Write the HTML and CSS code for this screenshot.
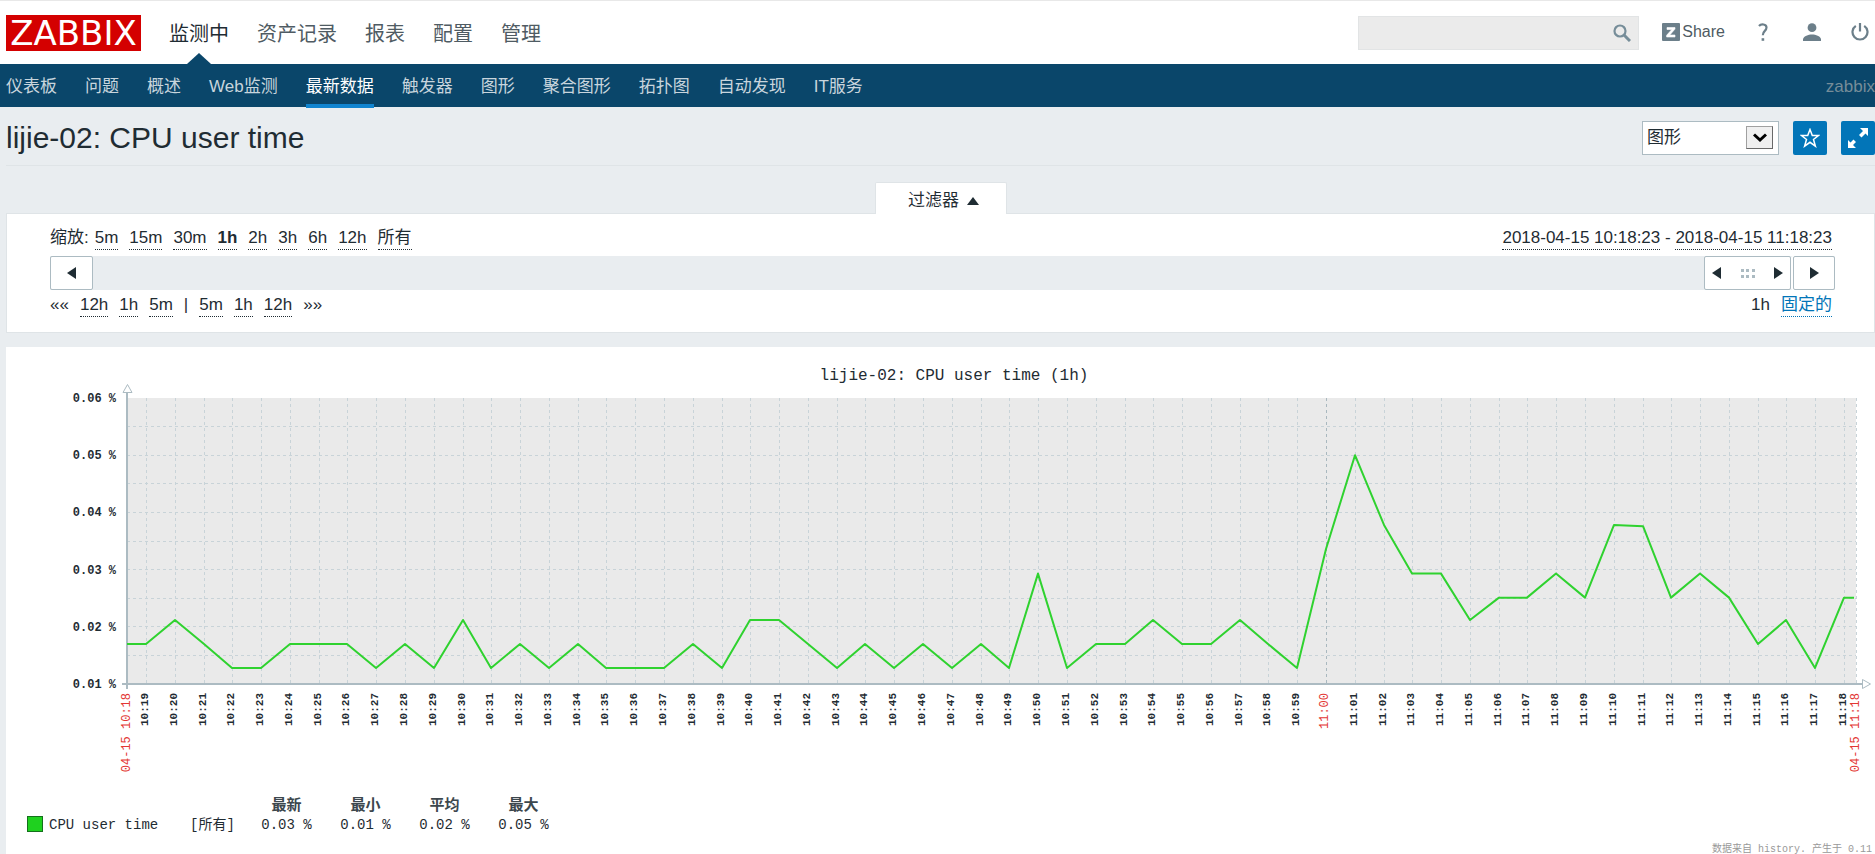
FILE: index.html
```html
<!DOCTYPE html>
<html lang="zh-CN">
<head>
<meta charset="utf-8">
<title>lijie-02: CPU user time</title>
<link rel="stylesheet" href="styles.css">
</head>
<body>
<header class="top">
  <a class="logo" href="#">ZABBIX</a>
  <nav class="menu">
    <a class="active" href="#">监测中</a>
    <a href="#">资产记录</a>
    <a href="#">报表</a>
    <a href="#">配置</a>
    <a href="#">管理</a>
  </nav>
  <form class="search">
    <input type="text" aria-label="搜索">
    <button type="button" aria-label="搜索"><svg width="18" height="18" viewBox="0 0 18 18" fill="none" stroke="#768d99"><circle cx="7" cy="7" r="5.5" stroke-width="2.2"/><path d="M11 11l6 6" stroke-width="3"/></svg></button>
  </form>
  <div class="tools">
    <a class="share" href="#"><svg width="18" height="18" viewBox="0 0 18 18"><rect width="18" height="18" rx="1" fill="#6c7f8a"/><path d="M5 4.5h8v1.6L7.8 12H13v2H4.600v-1.700L9.800 6.500H5z" fill="#fff" stroke="#fff" stroke-width=".6"/></svg>Share</a>
    <a href="#" aria-label="帮助"><svg width="18" height="18" viewBox="0 0 18 18" fill="none" stroke="#6c7f8a" stroke-width="2.200"><path d="M4 3C6 .6 11.500.8 11.500 4.600 11.500 8 7.800 7.800 7.800 12.200"/><path d="M6.600 16.500h2.600" stroke-width="2.600"/></svg></a>
    <a href="#" aria-label="用户"><svg width="18" height="18" viewBox="0 0 18 18" fill="#6c7f8a"><circle cx="9" cy="4.700" r="4.400"/><path d="M0 18v-2c1-3 5-4.500 9-4.500s8 1.500 9 4.500v2z"/></svg></a>
    <a href="#" aria-label="退出"><svg width="18" height="18" viewBox="0 0 18 18" fill="none" stroke="#6c7f8a" stroke-width="2.200"><path d="M9 0v8.500"/><path d="M4.800 2.800a7.500 7.500 0 1 0 8.400 0"/></svg></a>
  </div>
</header>
<nav class="subnav">
  <a href="#">仪表板</a>
  <a href="#">问题</a>
  <a href="#">概述</a>
  <a href="#">Web监测</a>
  <a class="active" href="#">最新数据</a>
  <a href="#">触发器</a>
  <a href="#">图形</a>
  <a href="#">聚合图形</a>
  <a href="#">拓扑图</a>
  <a href="#">自动发现</a>
  <a href="#">IT服务</a>
  <span class="server">zabbix</span>
</nav>
<main class="page">
  <div class="title-row">
    <h1>lijie-02: CPU user time</h1>
    <div class="select">
      <select aria-label="显示为"><option>图形</option><option>值</option></select>
      <span class="drop"><svg width="14" height="10" viewBox="0 0 14 10" fill="none" stroke="#000" stroke-width="3"><path d="M1 1.500l6 5.500 6-5.500"/></svg></span>
    </div>
    <button class="square" type="button" aria-label="收藏"><svg width="20" height="20" viewBox="0 0 20 20" fill="none" stroke="#fff" stroke-width="1.500"><path d="M10 1.500l2.300 6h6.200l-5 4 1.900 6.700L10 14.300l-5.400 3.900 1.900-6.700-5-4h6.200z"/></svg></button>
    <button class="square" type="button" aria-label="全屏"><svg width="20" height="20" viewBox="0 0 20 20" fill="#fff"><path d="M12 0h8v8l-2.500-2.500-4 4L11 7l4-4zM0 12l2.500 2.500L5.500 11.500 8 14l-3 3 3 3H0z"/></svg></button>
  </div>
  <div class="tab-row"><button class="tab" type="button">过滤器<i class="tri up"></i></button></div>
  <section class="filter">
    <div class="line">
      <div class="links zoom"><span class="label">缩放:</span><a href="#">5m</a><a href="#">15m</a><a href="#">30m</a><a class="bold" href="#">1h</a><a href="#">2h</a><a href="#">3h</a><a href="#">6h</a><a href="#">12h</a><a href="#">所有</a></div>
      <div class="dates"><a href="#">2018-04-15 10:18:23</a> - <a href="#">2018-04-15 11:18:23</a></div>
    </div>
    <div class="slider">
      <button class="prev" type="button" aria-label="向前"><i class="tri left"></i></button>
      <div class="thumb"><i class="tri left"></i><svg width="14" height="9" viewBox="0 0 14 9" fill="#acbbc2"><path d="M0 0h3v3H0zM5 0h3v3H5zM11 0h3v3h-3zM0 6h3v3H0zM5 6h3v3H5zM11 6h3v3h-3z"/></svg><i class="tri right"></i></div>
      <button class="next" type="button" aria-label="向后"><i class="tri right"></i></button>
    </div>
    <div class="line">
      <div class="links"><span>««</span><a href="#">12h</a><a href="#">1h</a><a href="#">5m</a><span>|</span><a href="#">5m</a><a href="#">1h</a><a href="#">12h</a><span>»»</span></div>
      <div class="links"><span>1h</span><a class="blue" href="#">固定的</a></div>
    </div>
  </section>
  <section class="graph">
    <div id="chart" class="chart"></div>
    <table class="legend">
      <thead><tr><th></th><th></th><th>最新</th><th>最小</th><th>平均</th><th>最大</th></tr></thead>
      <tbody><tr><td class="name"><i class="swatch"></i>CPU user time</td><td class="func">[所有]</td><td>0.03 %</td><td>0.01 %</td><td>0.02 %</td><td>0.05 %</td></tr></tbody>
    </table>
    <p class="source">数据来自 history. 产生于 0.11</p>
  </section>
</main>
<script src="chart.js"></script>
</body>
</html>
```
FILE: styles.css
```css
* { box-sizing: border-box; }
body {
  margin: 0;
  height: 100vh;
  overflow: hidden;
  display: flex;
  flex-direction: column;
  background: #e9edf0;
  color: #1f2c33;
  font: 17px/20px "Liberation Sans", "Noto Sans CJK SC", sans-serif;
}
a { color: inherit; text-decoration: none; }
button, select, input { font: inherit; color: inherit; border-radius: 0; }
button { display: flex; align-items: center; justify-content: center; padding: 0; }

.top {
  flex: none;
  display: flex;
  align-items: center;
  height: 64px;
  padding: 0 6px;
  background: #fff;
  border-top: 1px solid #e8e8e8;
}
.logo {
  width: 135px;
  height: 36px;
  background: #d40000;
  color: #fff;
  font: 34px/36px "DejaVu Sans", sans-serif;
  text-align: center;
}
.menu { display: flex; gap: 28px; margin-left: 28px; font-size: 20px; line-height: 66px; color: #4f5b63; }
.menu a { height: 63px; }
.menu .active { position: relative; color: #1f2c33; }
.menu .active::after {
  content: "";
  position: absolute;
  bottom: 0;
  left: 18px;
  border: 12px solid transparent;
  border-top-width: 0;
  border-bottom: 11px solid #0a466a;
}
.search {
  display: flex;
  width: 281px;
  height: 34px;
  margin-left: auto;
  background: #ebebeb;
  border: 1px solid #e2e4e5;
}
.search input { flex: 1; min-width: 0; border: 0; background: none; outline: 0; padding: 0 8px; }
.search button { width: 33px; border: 0; background: none; }
.tools { display: flex; align-items: center; gap: 30px; margin-left: 23px; padding-bottom: 2px; }
.tools a { display: flex; }
.share { align-items: center; gap: 2px; font-size: 16px; color: #4f5b63; }

.subnav {
  flex: none;
  display: flex;
  gap: 28px;
  height: 43px;
  padding-left: 6px;
  background: #0a466a;
  color: #c8d5dd;
  line-height: 45px;
}
.subnav .active { height: 44px; border-bottom: 4px solid #1184cf; color: #fff; }
.server { margin-left: auto; color: #768d99; }

.page { flex: 1; min-height: 0; display: flex; flex-direction: column; padding-left: 6px; }
.title-row { flex: none; display: flex; align-items: center; gap: 14px; height: 59px; padding-top: 4px; border-bottom: 1px solid #dfe4e7; }
h1 { margin: 0 auto 0 0; font-size: 30px; line-height: 36px; font-weight: normal; }
.select { position: relative; }
.select select {
  display: block;
  width: 137px;
  height: 34px;
  padding: 0 4px;
  appearance: none;
  background: #fff;
  border: 1px solid #acbbc2;
}
.drop {
  position: absolute;
  top: 5px;
  right: 6px;
  width: 27px;
  height: 23px;
  display: flex;
  align-items: center;
  justify-content: center;
  background: #f0f0f0;
  border: 1px solid #a0a0a0;
  border-right-color: #696969;
  border-bottom-color: #696969;
  pointer-events: none;
}
.square { width: 34px; height: 34px; border: 0; border-radius: 2px; background: #0275b8; }

.tab-row { flex: none; display: flex; justify-content: center; padding-top: 16px; }
.tab {
  position: relative;
  gap: 8px;
  width: 132px;
  height: 32px;
  margin-bottom: -1px;
  padding: 4px 0 0 6px;
  background: #fff;
  border: 1px solid #dfe4e7;
  border-bottom: 0;
  border-radius: 2px 2px 0 0;
}
.tri { width: 0; height: 0; border: 6px solid transparent; }
.tri.up { border-top: 0; border-bottom: 8px solid #1f2c33; }
.tri.left { border-left: 0; border-right: 9px solid #1f2c33; }
.tri.right { border-right: 0; border-left: 9px solid #1f2c33; }

.filter { flex: none; padding: 14px 39px 9px 43px; background: #fff; border: 1px solid #dfe4e7; }
.line { display: flex; justify-content: space-between; height: 28px; padding-right: 3px; line-height: 20px; }
.links { display: flex; gap: 11px; }
.label { margin-right: -5px; }
.line a { display: inline-block; height: 22px; border-bottom: 1px dotted #1f2c33; }
.line .blue { color: #0275b8; border-color: #0275b8; }
.bold { font-weight: bold; }
.slider { display: flex; height: 34px; margin-bottom: 5px; background: #e9edf0; }
.slider button, .thumb { height: 34px; background: #fff; border: 1px solid #acbbc2; border-radius: 2px; }
.prev { width: 43px; }
.next { width: 42px; box-shadow: -2px 0 #fff; }
.thumb { display: flex; align-items: center; justify-content: space-between; width: 87px; padding: 0 7px; margin: 0 2px 0 auto; }

.graph { flex: 1; margin-top: 14px; background: #fff; font-family: "Liberation Mono", "Noto Sans CJK SC", monospace; }
.chart { height: 450px; }
.chart svg { display: block; }
.chart-title { font-size: 16px; fill: #1f2c33; text-anchor: middle; }
.tick { font-size: 12px; font-weight: bold; fill: #1f2c33; text-anchor: end; }
.time { font-size: 11px; }
.mark { font-weight: normal; fill: #e33734; }
.grid { stroke: #c8d3d8; stroke-dasharray: 3 3; }
.grid.hour { stroke: #a9b8bf; }
.axis { fill: none; stroke: #acbbc2; stroke-width: 2; }
.arrow { fill: #fff; stroke: #acbbc2; stroke-width: 1; }
.series { fill: none; stroke: #2fd22f; stroke-width: 2; stroke-linejoin: round; }
.legend { margin-left: 21px; border-collapse: collapse; font-size: 14px; line-height: 19px; }
.legend th, .legend td { width: 79px; padding: 0; text-align: center; font-weight: normal; white-space: nowrap; }
.legend th { font-size: 15px; font-weight: bold; color: #3c474d; }
.legend th:nth-child(-n+2) { width: auto; }
.legend .name { width: 159px; text-align: left; }
.legend .func { width: 61px; padding-right: 8px; }
.swatch { display: inline-block; width: 16px; height: 16px; margin-right: 6px; vertical-align: -3px; background: #1fd11f; border: 1px solid #14701c; }
.source { margin: 7px 3px 0 0; font-size: 10px; line-height: 16px; color: #999; text-align: right; }
```
FILE: chart.js
```js
(function () {
  const host = document.getElementById("chart");
  const values = [
    170, 212, 170, 128, 128, 170, 170, 170, 128, 170, 128, 212, 128, 170, 128,
    170, 128, 128, 128, 170, 128, 212, 212, 170, 128, 170, 128, 170, 128, 170,
    128, 293, 128, 170, 170, 212, 170, 170, 212, 170, 128, 336, 500, 378, 293,
    293, 212, 251, 251, 293, 251, 378, 376, 251, 293, 251, 170, 212, 128, 251
  ];

  function draw() {
    const w = host.clientWidth;
    const left = 121, first = 140, last = w - 31, right = w - 19;
    const yTop = 51, yBase = 337;
    const px = i => Math.round(first + i * (last - first) / (values.length - 1));
    const py = v => yBase - (v - 100) / 500 * (yBase - yTop);
    let s = `<rect x="${left}" y="${yTop}" width="${right - left}" height="${yBase - yTop}" fill="#eaeaea"/>`;
    for (let v = 150; v < 600; v += 50) {
      const y = Math.floor(py(v)) + 0.5;
      s += `<path class="grid" d="M${left} ${y}H${right}"/>`;
    }
    let times = "";
    values.forEach((v, i) => {
      const x = px(i), m = 19 + i;
      const hour = m === 60;
      const label = m < 60 ? "10:" + m : "11:" + String(m - 60).padStart(2, "0");
      s += `<path class="grid${hour ? " hour" : ""}" d="M${x + 0.5} ${yTop}V${yBase}"/>`;
      times += `<text class="tick ${hour ? "mark" : "time"}" transform="translate(${x + 2} 346) rotate(-90)">${label}</text>`;
    });
    s += `<path class="grid" d="M${right + 0.5} ${yTop}V${yBase}"/>`;
    for (let v = 1; v <= 6; v++) {
      s += `<text class="tick" x="110" y="${Math.round(py(v * 100)) + 4}">0.0${v} %</text>`;
    }
    [["10:18", left], ["11:18", right]].forEach(([t, x]) => {
      times += `<text class="tick mark" transform="translate(${x + 3} 346) rotate(-90)">04-15 ${t}</text>`;
    });
    s += `<path class="axis" d="M${left} 45V342M116 ${yBase}H${w - 13}"/>`;
    s += `<path class="arrow" d="M${left - 4} 45.5h9l-4.500-8zM${w - 12.5} ${yBase - 4.5}v9l8-4.500z"/>`;
    const pts = [`${left},${py(170)}`].concat(values.map((v, i) => `${px(i)},${py(v)}`), `${right - 2},${py(251)}`);
    s += `<polyline class="series" points="${pts.join(" ")}"/>`;
    s += `<text class="chart-title" x="${Math.round(w / 2) + 13}" y="33">lijie-02: CPU user time (1h)</text>`;
    host.innerHTML = `<svg width="${w}" height="448" role="img" aria-label="CPU user time">${s}${times}</svg>`;
  }

  draw();
  window.addEventListener("resize", draw);
})();
```
